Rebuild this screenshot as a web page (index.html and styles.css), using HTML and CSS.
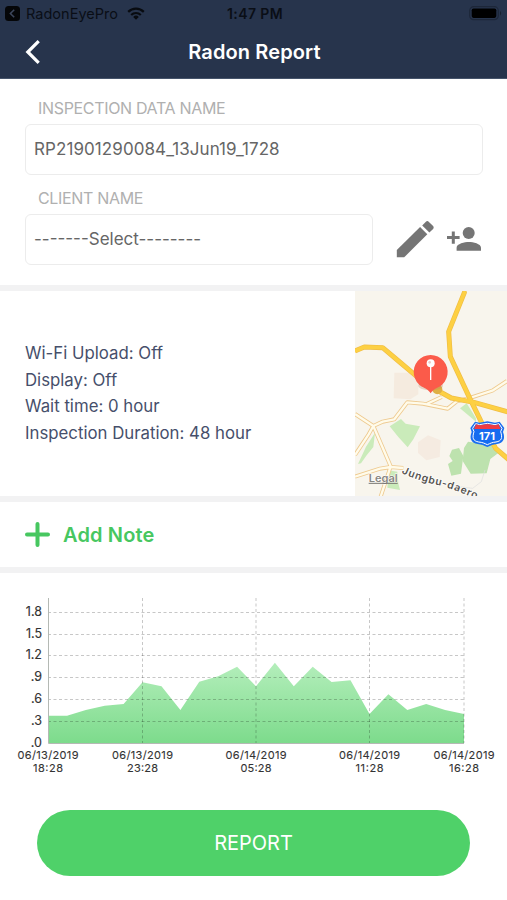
FILE: index.html
```html
<!DOCTYPE html>
<html lang="en">
<head>
<meta charset="utf-8">
<title>Radon Report</title>
<link rel="stylesheet" href="styles.css">
</head>
<body>
<header class="header">
  <div class="status">
    <div class="status-left">
      <svg width="15" height="15" viewBox="0 0 15 15"><rect width="15" height="15" rx="3.5" fill="#050608"/><path d="M9.2 3.7 5.4 7.5l3.8 3.8" fill="none" stroke="#3c465b" stroke-width="1.6"/></svg>
      <span class="status-app">RadonEyePro</span>
      <svg class="wifi" width="18" height="13" viewBox="0 0 18 13"><g fill="none" stroke="#080b10" stroke-width="2.2"><path d="M1.2 4.9a11 11 0 0 1 15.6 0"/><path d="M4.2 8a6.8 6.8 0 0 1 9.6 0"/></g><path d="M6.2 9.9a4 4 0 0 1 5.6 0L9 12.7z" fill="#080b10"/></svg>
    </div>
    <span class="status-time">1:47 PM</span>
    <svg class="battery" width="33" height="15" viewBox="0 0 33 15"><rect x=".7" y=".7" width="28.6" height="13" rx="4" fill="none" stroke="#1d2739" stroke-width="1.2"/><rect x="2.7" y="2.5" width="24.6" height="9.4" rx="1.8" fill="#000"/><path d="M31 5v4.4c1.5-.7 1.5-3.7 0-4.4z" fill="#1a2231"/></svg>
  </div>
  <div class="nav">
    <svg class="back" width="16" height="26" viewBox="0 0 16 26"><path d="M13.7 2.2 2.8 13l10.9 10.8" fill="none" stroke="#fff" stroke-width="3.2"/></svg>
    <h1 class="title">Radon Report</h1>
  </div>
</header>
<main>
  <section class="form">
    <label class="label label-data">INSPECTION DATA NAME</label>
    <div class="field field-data"><span>RP21901290084_13Jun19_1728</span></div>
    <label class="label label-client">CLIENT NAME</label>
    <div class="client-row">
      <div class="field field-client"><span>-------Select--------</span></div>
      <svg class="edit" width="38" height="38" viewBox="0 0 38 38" fill="#757575"><path d="M.8 29.9 24.1 7.1l7.2 7.2L8.2 37.3H.8z"/><path d="m26.2 5.400 3.700-3.700c.8-.8 2-.8 2.800 0l4.400 4.400c.8.8.8 2 0 2.800l-3.700 3.700z"/></svg>
      <svg class="add-person" width="34" height="24" viewBox="0 0 34 24" fill="#757575"><circle cx="21.7" cy="6" r="6"/><path d="M9.600 23.800v-3.100c0-4 8.100-5.700 12.300-5.700S34 16.700 34 20.700v3.100zM0 9.100h4.800V4.500h3v4.600h4.800v3H7.800v4.700h-3v-4.700H0z"/></svg>
    </div>
  </section>
  <section class="info">
    <div class="details">
      <p>Wi-Fi Upload: Off</p>
      <p>Display: Off</p>
      <p>Wait time: 0 hour</p>
      <p>Inspection Duration: 48 hour</p>
    </div>
    <svg class="map" width="152" height="205" viewBox="15 18 456 615">
      <rect x="15" y="18" width="456" height="615" fill="#f8f5ed"/>
      <path d="M133 263h72v65l-24 15-50-3z" fill="#f5ebdf"/>
      <path d="m204 472 30-21 38 15-3 50-40 10-25-22z" fill="#f5ebe1"/>
      <g fill="#caebba">
        <path d="m119 424 34-22 14 14 43 8-20 39-17 24-28-31z"/>
        <path d="m330 370 20-15 28 45v10z"/>
        <path d="m354 470 80 10 14 22-27 20-11 43-48 1-24-38 4-39z" fill="#bde2ae"/>
        <path d="m306 494 21-5 13 24-7 53-29 6-10-35 14-9-10-15z" fill="#bde2ae"/>
        <path d="m75 443-27 42-24 52 9-2 17-24 20-25z"/>
        <path d="m116 556 26 4 3 35 5 20-38-7z"/>
      </g>
      <path d="m405 555-11 35-26 20-42-5" fill="none" stroke="#dedede" stroke-width="2"/>
      <g fill="none" stroke-linejoin="round">
        <g stroke="#eec98e" stroke-width="12">
          <path d="m15 387 55 36 28-13 35-7 39-51 47 4 74 15 27-22 39-10 68-22 44-29"/>
          <path d="M70 423 56 448 15 510M70 423l52 121-31 94M15 575l75-24 32-5 38 3M230 357l45-21"/>
        </g>
        <g stroke="#fffbea" stroke-width="7">
          <path d="m15 387 55 36 28-13 35-7 39-51 47 4 74 15 27-22 39-10 68-22 44-29"/>
          <path d="M70 423 56 448 15 510M70 423l52 121-31 94M15 575l75-24 32-5 38 3M230 357l45-21"/>
        </g>
        <g stroke="#f0bd45" stroke-width="15">
          <path d="m15 198 28-12 55 2 51 43 52 44 59 40 44 24 68 13 110 31"/>
          <path d="m343 23-47 117 5 75 57 122 34 70 45 83 44 38" stroke-linecap="round"/>
        </g>
        <g stroke="#fdd043" stroke-width="11">
          <path d="m15 198 28-12 55 2 51 43 52 44 59 40 44 24 68 13 110 31"/>
          <path d="m343 23-47 117 5 75 57 122 34 70 45 83 44 38" stroke-linecap="round"/>
        </g>
      </g>
      <circle cx="262" cy="313" r="15" fill="#dfb045"/>
      <ellipse cx="242" cy="302" rx="37" ry="14" fill="#b98662" opacity=".3"/>
      <path d="M242 325c-7-12-16-15-26-20a51 51 0 1 1 52 0c-10 5-19 8-26 20z" fill="#fb5b4a"/>
      <path d="M242 244v41" stroke="#fff" stroke-width="4"/>
      <circle cx="242" cy="235" r="12" fill="#fff"/><circle cx="239" cy="232" r="4" fill="#efcac4"/>
      <path d="m375 410 14 3 23-4 23 4 14-3 14 19-4 12c8 20 1 33-18 36-13 1-18 5-29 9-11-4-16-8-29-9-19-3-26-16-18-36l-4-12z" fill="#1b6ff0"/>
      <path d="m377 416 12 3 23-4 23 4 12-3 9 14-4 10c6 19 3 28-14 31-12 1-17 4-26 8-9-4-14-7-26-8-17-3-20-12-14-31l-4-10z" fill="#166cf0" stroke="#fff" stroke-width="3"/>
      <path d="m378 418 11 3 23-4 23 4 11-3 6 14H372z" fill="#ef3c43"/>
      <text class="route" x="411" y="466" text-anchor="middle" textLength="48" lengthAdjust="spacingAndGlyphs">171</text>
      <path id="street" d="M154 564Q208 588 258 599T400 651" fill="none"/>
      <text class="street"><textPath href="#street" textLength="238">Jungbu-daero</textPath></text>
      <text class="legal" x="56" y="590" textLength="87" lengthAdjust="spacingAndGlyphs">Legal</text>
      <path d="M56 595h87" stroke="#777571" stroke-width="3"/>
    </svg>
  </section>
  <section class="note">
    <svg width="25" height="25" viewBox="0 0 25 25"><path d="M12.500 2v21M2 12.500h21" stroke="#47c760" stroke-width="4" stroke-linecap="round"/></svg>
    <span class="note-text">Add Note</span>
  </section>
  <section class="chart-section">
    <svg class="chart" width="507" height="210" viewBox="0 573 507 210">
      <defs><linearGradient id="area" x1="0" y1="0" x2="0" y2="1"><stop stop-color="#b4eebb"/><stop offset="1" stop-color="#7ddb8c"/></linearGradient></defs>
      <path d="M48 743V715.700H67L85.800 710 104.700 705.700 123.600 704 142.500 682.300 161.500 686.300 180.400 710 199.300 681.700 218.200 676.300 237.100 666.700 256 686.300 274.900 662.700 293.800 686.300 312.700 666.700 331.600 682 350.500 680.300 369.500 714 388.400 694.300 407.300 710 426.200 704 445.100 710 464 714V743z" fill="url(#area)"/>
      <g class="grid">
        <path d="M48 612.500h416M48 634.500h416M48 655.500h416M48 677.500h416M48 699.500h416M48 721.500h416"/>
        <path d="M142.500 598v145M256 598v145M369.500 598v145M464 598v145"/>
      </g>
      <path d="M48.500 598v145.500H464" fill="none" stroke="#b4b9b4" stroke-width="1"/>
      <g class="yaxis" text-anchor="end">
        <text x="42" y="615.500">1.8</text><text x="42" y="637.500">1.5</text><text x="42" y="659">1.2</text><text x="42" y="681">.9</text><text x="42" y="702.500">.6</text><text x="42" y="724.500">.3</text><text x="42" y="746.500">.0</text>
      </g>
      <g class="xaxis" text-anchor="middle">
        <text x="48" y="759" textLength="61">06/13/2019</text><text x="48" y="772" textLength="30">18:28</text>
        <text x="142.500" y="759" textLength="61">06/13/2019</text><text x="142.500" y="772" textLength="31">23:28</text>
        <text x="256" y="759" textLength="61">06/14/2019</text><text x="256" y="772" textLength="31">05:28</text>
        <text x="369.500" y="759" textLength="61">06/14/2019</text><text x="369.500" y="772" textLength="28">11:28</text>
        <text x="464" y="759" textLength="61">06/14/2019</text><text x="464" y="772" textLength="30">16:28</text>
      </g>
    </svg>
    <button class="report">REPORT</button>
  </section>
</main>
</body>
</html>
```
FILE: styles.css
```css
* { box-sizing: border-box; }
body { margin: 0; width: 507px; height: 900px; overflow: hidden; background: #fff; font-family: Inter, sans-serif; }
svg { display: block; flex: none; }
h1, p { margin: 0; }
.header { height: 79px; background: #27344c; border-bottom: 1px solid #46546b; }
.status { height: 27px; padding: 0 5px; display: grid; grid-template-columns: 1fr auto 1fr; align-items: center; color: #0a0e16; }
.status-left { display: flex; align-items: center; }
.status-app { font-size: 14.5px; margin-left: 6px; letter-spacing: .03px; }
.wifi { margin-left: 9px; }
.status-time { font-size: 14px; font-weight: 600; letter-spacing: .4px; margin-left: 3px; }
.battery { justify-self: end; }
.nav { height: 50px; display: grid; grid-template-columns: 1fr auto 1fr; align-items: center; }
.back { margin-left: 25px; }
.title { font-size: 20px; line-height: 24px; font-weight: 600; color: #fff; letter-spacing: .12px; margin-left: 2px; }
.form { height: 212px; padding: 20px 25px 0; border-bottom: 6px solid #f2f2f3; }
.label { display: block; height: 20px; line-height: 18px; margin-left: 13px; font-size: 16px; letter-spacing: -.33px; color: #b0b0b0; }
.label-client { margin-top: 14px; }
.field { height: 51px; border: 1px solid #ececec; border-radius: 6px; padding: 0 0 1px 8px; display: flex; align-items: center; font-size: 17px; color: #666; white-space: nowrap; }
.field-data { margin-top: 5px; width: 458px; letter-spacing: .08px; }
.field-client { width: 348px; }
.client-row { display: flex; align-items: center; margin-top: 5px; }
.edit { margin: -2px 0 0 23px; }
.add-person { margin: -2px 0 0 13px; }
.info { height: 211px; display: flex; justify-content: space-between; border-bottom: 6px solid #f2f2f3; }
.details { padding: 49px 0 0 25px; font-size: 16.8px; line-height: 26.6px; color: #464f6b; }
.route { font: 700 32px Inter, sans-serif; fill: #fff; }
.street { font: 600 31px Inter, sans-serif; fill: #55524e; stroke: #fff; stroke-width: 4px; paint-order: stroke; }
.legal { font: 600 30px Inter, sans-serif; fill: #888682; stroke: #fff; stroke-width: 3px; paint-order: stroke; }
.note { height: 71px; border-bottom: 6px solid #f2f2f3; display: flex; align-items: center; padding-left: 25px; gap: 13px; color: #47c760; }
.note-text { font-size: 20px; font-weight: 600; letter-spacing: .15px; }
.grid { stroke: #000; stroke-opacity: .22; stroke-width: 1px; stroke-dasharray: 3 2.5; }
.yaxis { font-size: 12.5px; fill: #333; stroke: #333; stroke-width: .15px; }
.xaxis { font-size: 11px; fill: #333; stroke: #333; stroke-width: .1px; }
.report { display: block; margin: 27px 0 0 37px; width: 433px; height: 66px; border: 0; border-radius: 33px; background: #4fd169; color: #fff; font: 400 20px Inter, sans-serif; }
```
